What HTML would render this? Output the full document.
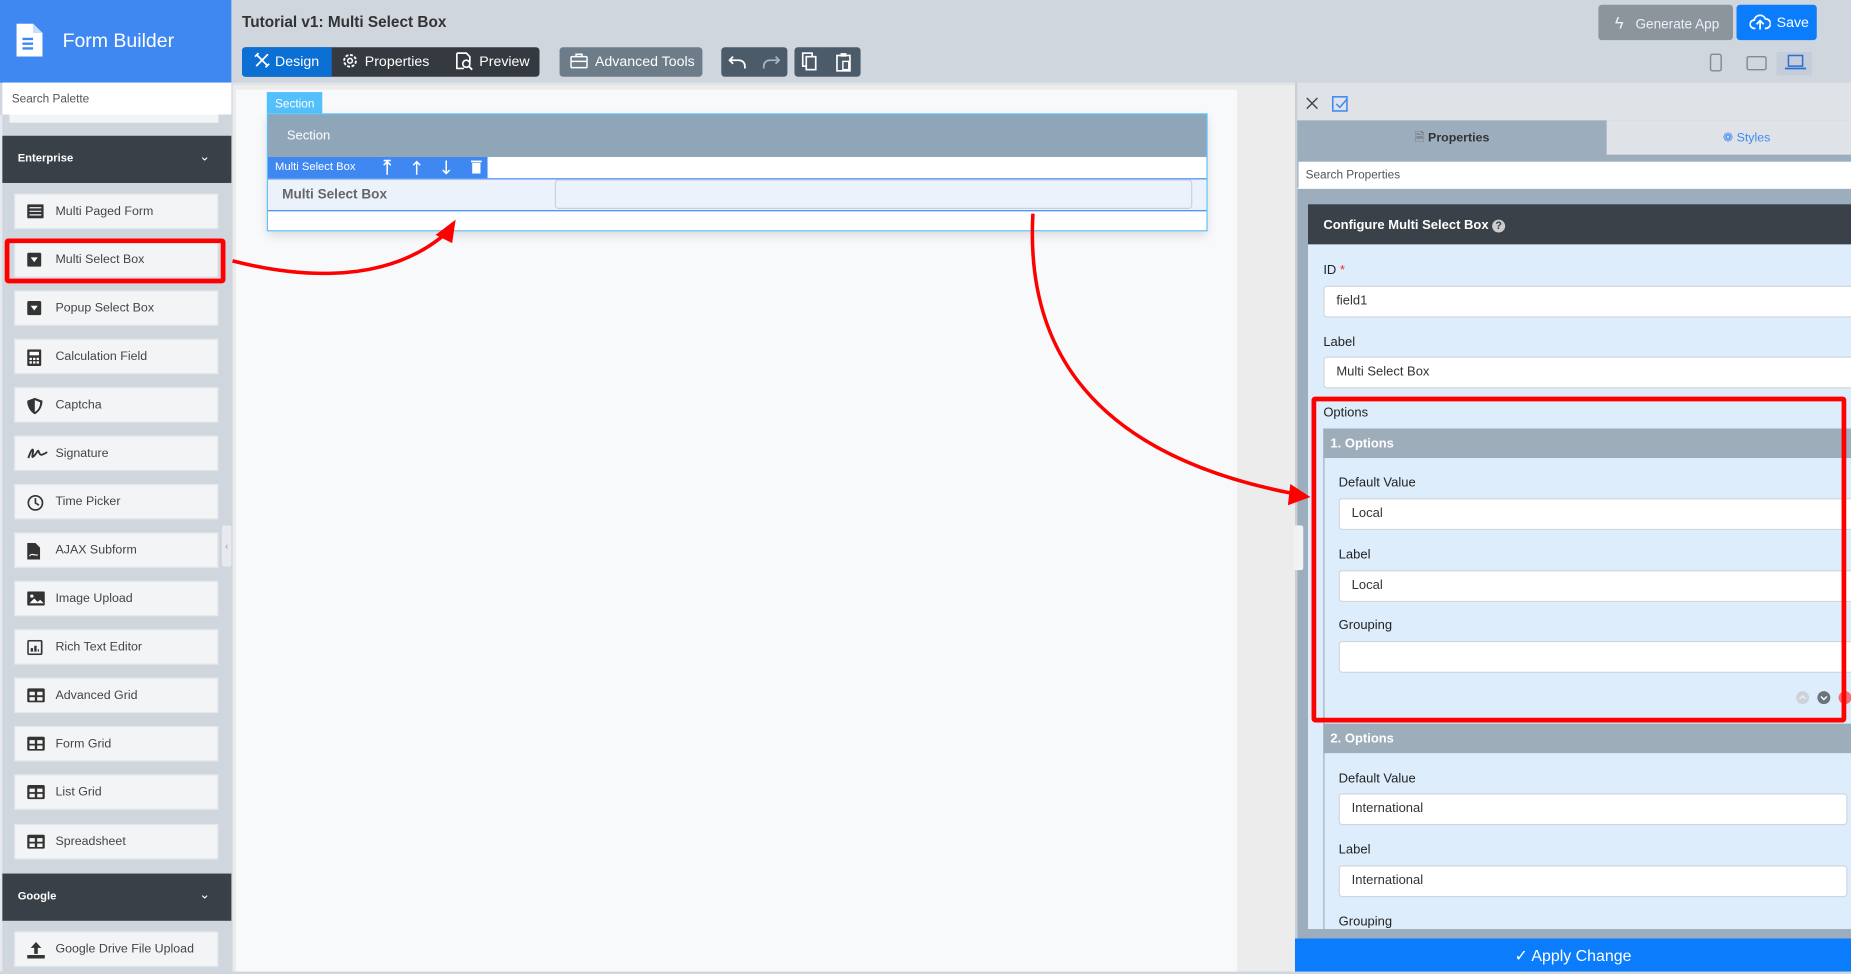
<!DOCTYPE html>
<html><head><meta charset="utf-8"><style>
*{box-sizing:border-box;margin:0;padding:0}
html,body{width:1851px;height:972px;overflow:hidden;background:#cfd6dd;font-family:"Liberation Sans",sans-serif}
#w{position:absolute;left:0;top:0;width:1568px;height:823px;transform:scale(1.18049);transform-origin:0 0;background:#cfd6dd}
.a{position:absolute}
.it{position:absolute;left:12px;width:173px;height:30px;background:#f3f4f6;border:1px solid #e3e6ea;font-size:10.5px;color:#444;line-height:29px;padding-left:34px}
.it svg{position:absolute;left:10px;top:8px}
.lbl{position:absolute;font-size:11px;color:#222}
.inp{position:absolute;background:#fff;border:1px solid #cfd6dd;border-radius:3px;font-size:11px;color:#333;line-height:24px;padding-left:10px}
.btn{position:absolute;color:#fff;font-size:12px;line-height:24px}
</style></head><body><div id="w">
<!-- sidebar -->
<div class="a" style="left:0;top:0;width:196px;height:70px;background:#3f88f2"></div>
<svg class="a" style="left:14px;top:20px" width="22" height="28" viewBox="0 0 22 28"><path d="M0 0h14l8 8v20H0z" fill="#fff"/><path d="M14 0v8h8" fill="#c9dcfb"/><path d="M5 13h9M5 17h9M5 21h9" stroke="#3f88f2" stroke-width="2"/></svg>
<div class="a" style="left:53px;top:26px;color:#fff;font-size:16.5px">Form Builder</div>
<div class="a" style="left:2px;top:70px;width:194px;height:27px;background:#fff;font-size:10px;color:#555;padding:9px 0 0 8px">Search Palette</div>
<div class="a" style="left:8px;top:97px;width:177px;height:7px;background:#f3f4f6"></div>
<div class="a" style="left:0;top:97px;width:2px;height:726px;background:#e6e9ed"></div>
<div class="a" style="left:2px;top:115px;width:194px;height:40px;background:#3a4048;color:#fff;font-size:9.5px;font-weight:bold;padding:14px 0 0 13px">Enterprise<span style="position:absolute;right:18px;top:11px;font-weight:normal;font-size:11px">&#8964;</span></div>
<div class="it" style="top:164px"><svg width="14" height="12"><rect x="0" y="0" width="14" height="12" rx="1" fill="#333"/><path d="M2 3h10M2 6h10M2 9h10" stroke="#f3f4f6" stroke-width="1"/></svg>Multi Paged Form</div>
<div class="it" style="top:205px"><svg width="12" height="12"><rect width="12" height="12" rx="1.5" fill="#333"/><path d="M3 4h6l-3 4z" fill="#fff"/></svg>Multi Select Box</div>
<div class="it" style="top:246px"><svg width="12" height="12"><rect width="12" height="12" rx="1.5" fill="#333"/><path d="M3 4h6l-3 4z" fill="#fff"/></svg>Popup Select Box</div>
<div class="it" style="top:287px"><svg width="12" height="14"><rect width="12" height="14" rx="1" fill="#333"/><rect x="2" y="2" width="8" height="3" fill="#fff"/><path d="M2 7h2v2H2zM5 7h2v2H5zM8 7h2v2H8zM2 10h2v2H2zM5 10h2v2H5zM8 10h2v2H8z" fill="#fff"/></svg>Calculation Field</div>
<div class="it" style="top:328px"><svg width="13" height="14"><path d="M6.5 0L13 2.5C13 8 10 12 6.5 14 3 12 0 8 0 2.5z" fill="#333"/><path d="M6.5 2L11 3.8C11 8 9 10.5 6.5 12z" fill="#f3f4f6"/></svg>Captcha</div>
<div class="it" style="top:369px"><svg width="18" height="12"><path d="M1 10C3 4 5 1 5 4S3 11 6 8 9 2 10 5 12 8 17 5" stroke="#333" stroke-width="1.6" fill="none"/></svg>Signature</div>
<div class="it" style="top:410px"><svg width="14" height="14"><circle cx="7" cy="7" r="6" stroke="#333" stroke-width="1.4" fill="none"/><path d="M7 3v4l3 2" stroke="#333" stroke-width="1.4" fill="none"/></svg>Time Picker</div>
<div class="it" style="top:451px"><svg width="11" height="14"><path d="M0 0h7l4 4v10H0z" fill="#333"/><path d="M2 11c2-3 4 0 7-1" stroke="#fff" fill="none"/></svg>AJAX Subform</div>
<div class="it" style="top:492px"><svg width="15" height="12"><rect width="15" height="12" rx="1" fill="#333"/><path d="M2 10l4-4 3 3 2-2 3 3z" fill="#fff"/><circle cx="4" cy="4" r="1.4" fill="#fff"/></svg>Image Upload</div>
<div class="it" style="top:533px"><svg width="13" height="13"><rect x=".7" y=".7" width="11.6" height="11.6" rx="1" stroke="#333" stroke-width="1.4" fill="none"/><path d="M3 10h2V7H3zM6 10h2V5H6zM9 10h1V8H9z" fill="#333"/></svg>Rich Text Editor</div>
<div class="it" style="top:574px"><svg width="15" height="12"><rect width="15" height="12" rx="1.5" fill="#333"/><path d="M2 3h4.5v3H2zM8.5 3H13v3H8.5zM2 7.5h4.5v3H2zM8.5 7.5H13v3H8.5z" fill="#f3f4f6"/></svg>Advanced Grid</div>
<div class="it" style="top:615px"><svg width="15" height="12"><rect width="15" height="12" rx="1.5" fill="#333"/><path d="M2 3h4.5v3H2zM8.5 3H13v3H8.5zM2 7.5h4.5v3H2zM8.5 7.5H13v3H8.5z" fill="#f3f4f6"/></svg>Form Grid</div>
<div class="it" style="top:656px"><svg width="15" height="12"><rect width="15" height="12" rx="1.5" fill="#333"/><path d="M2 3h4.5v3H2zM8.5 3H13v3H8.5zM2 7.5h4.5v3H2zM8.5 7.5H13v3H8.5z" fill="#f3f4f6"/></svg>List Grid</div>
<div class="it" style="top:698px"><svg width="15" height="12"><rect width="15" height="12" rx="1.5" fill="#333"/><path d="M2 3h4.5v3H2zM8.5 3H13v3H8.5zM2 7.5h4.5v3H2zM8.5 7.5H13v3H8.5z" fill="#f3f4f6"/></svg>Spreadsheet</div>
<div class="a" style="left:2px;top:740px;width:194px;height:40px;background:#3a4048;color:#fff;font-size:9.5px;font-weight:bold;padding:14px 0 0 13px">Google<span style="position:absolute;right:18px;top:11px;font-weight:normal;font-size:11px">&#8964;</span></div>
<div class="it" style="top:789px"><svg width="15" height="14"><path d="M7.5 0L12 5H9v5H6V5H3z" fill="#333"/><rect x="0" y="11" width="15" height="3" fill="#333"/></svg>Google Drive File Upload</div>
<div class="a" style="left:188px;top:445px;width:8px;height:35px;background:#e6e9ed;border-radius:2px;font-size:8px;color:#999;line-height:35px;text-align:center">&#8249;</div>
<div class="a" style="left:4px;top:202px;width:187px;height:38px;border:4px solid #f00;border-radius:3px"></div>
<!-- top bar -->
<div class="a" style="left:205px;top:11px;font-size:13px;font-weight:bold;color:#333">Tutorial v1: Multi Select Box</div>
<div class="a" style="left:205px;top:40px;width:252px;height:25px;background:#343a40;border-radius:3px"></div>
<div class="btn" style="left:205px;top:40px;width:76px;height:25px;background:#0b6fd4;border-radius:3px 0 0 3px;padding-left:10px"><svg width="14" height="14" style="vertical-align:-2px;margin-right:4px"><path d="M2 2l10 10M12 2L2 12M1 4l3-3M10 13l3-3" stroke="#fff" stroke-width="1.5" fill="none"/></svg>Design</div>
<div class="btn" style="left:289px;top:40px"><svg width="15" height="15" style="vertical-align:-3px;margin-right:5px"><circle cx="7.5" cy="7.5" r="5" stroke="#fff" stroke-width="1.6" fill="none" stroke-dasharray="2.5 1.4"/><circle cx="7.5" cy="7.5" r="2" stroke="#fff" stroke-width="1.3" fill="none"/></svg>Properties</div>
<div class="btn" style="left:385px;top:40px"><svg width="16" height="16" style="vertical-align:-4px;margin-right:5px"><path d="M2 1h8l3 3v5" stroke="#fff" stroke-width="1.4" fill="none"/><path d="M2 1v13h6" stroke="#fff" stroke-width="1.4" fill="none"/><circle cx="10" cy="10" r="3" stroke="#fff" stroke-width="1.4" fill="none"/><path d="M12 12l3 3" stroke="#fff" stroke-width="1.6"/></svg>Preview</div>
<div class="btn" style="left:474px;top:40px;width:121px;height:25px;background:#6c7c89;border-radius:3px;padding-left:9px"><svg width="15" height="13" style="vertical-align:-2px;margin-right:6px"><rect x=".7" y="3" width="13.6" height="9.3" rx="1" stroke="#fff" stroke-width="1.3" fill="none"/><path d="M5 3V1h5v2M1 7h13" stroke="#fff" stroke-width="1.3" fill="none"/></svg>Advanced Tools</div>
<div class="a" style="left:611px;top:40px;width:56px;height:25px;background:#4b5b69;border-radius:3px"></div>
<svg class="a" style="left:617px;top:44px" width="44" height="16"><path d="M4 4l-3 3 3 3M1 7h8a5 5 0 0 1 5 5v2" stroke="#fff" stroke-width="1.5" fill="none"/><path d="M40 4l3 3-3 3M43 7h-8a5 5 0 0 0-5 5v2" stroke="#a9b4be" stroke-width="1.5" fill="none"/></svg>
<div class="a" style="left:673px;top:40px;width:56px;height:25px;background:#4b5b69;border-radius:3px"></div>
<svg class="a" style="left:679px;top:44px" width="44" height="17"><rect x="1" y="1" width="8" height="11" stroke="#fff" stroke-width="1.4" fill="none"/><rect x="4" y="4" width="8" height="11" fill="#4b5b69" stroke="#fff" stroke-width="1.4"/><rect x="30" y="3" width="11" height="13" stroke="#fff" stroke-width="1.4" fill="none"/><rect x="33" y="1" width="5" height="3" fill="#fff"/><rect x="35" y="8" width="5" height="7" stroke="#fff" stroke-width="1.2" fill="none"/></svg>
<div class="btn" style="left:1354px;top:4px;width:114px;height:30px;background:#8d959c;border-radius:3px;line-height:30px;padding-left:14px;color:#eef;font-size:11.5px"><span style="font-size:14px;margin-right:10px">&#991;</span>Generate App</div>
<div class="btn" style="left:1471px;top:4px;width:68px;height:30px;background:#0b7dfc;border-radius:3px;line-height:30px;padding-left:11px"><svg width="18" height="13" style="vertical-align:-2px;margin-right:5px"><path d="M5 12H4a3.5 3.5 0 0 1 0-7 5 5 0 0 1 9.5-1A4 4 0 0 1 14 12h-1" stroke="#fff" stroke-width="1.5" fill="none"/><path d="M9 13V6M6 8.5l3-3 3 3" stroke="#fff" stroke-width="1.5" fill="none"/></svg>Save</div>
<svg class="a" style="left:1447px;top:44px" width="100" height="20"><rect x="2" y="2" width="9" height="14" rx="1.5" stroke="#7f8a96" stroke-width="1.2" fill="none"/><rect x="33" y="4" width="16" height="11" rx="1.5" stroke="#7f8a96" stroke-width="1.2" fill="none"/><rect x="58" y="-3" width="30" height="25" fill="#c5cdda"/><rect x="68" y="3" width="12" height="9" stroke="#2d6fd3" stroke-width="1.3" fill="none"/><path d="M65 14h18" stroke="#2d6fd3" stroke-width="1.5"/></svg>
<!-- canvas -->
<div class="a" style="left:197px;top:70px;width:900px;height:753px;background:#ececec;border-top:2px solid #dfe3e7"></div>
<div class="a" style="left:200px;top:76px;width:848px;height:747px;background:#f8f9fb"></div>
<div class="a" style="left:226px;top:78px;width:47px;height:19px;background:#54c0fb;color:#fff;font-size:10px;padding:5px 0 0 7px">Section</div>
<div class="a" style="left:226px;top:96px;width:797px;height:100px;background:#fff;border:1px solid #5bc0fb;box-shadow:0 4px 8px rgba(0,0,0,.12)"></div>
<div class="a" style="left:227px;top:97px;width:795px;height:36px;background:#8fa5b8;color:#fff;font-size:11px;padding:12px 0 0 16px">Section</div>
<div class="a" style="left:227px;top:133px;width:186px;height:18px;background:#3f88f2;color:#fff;font-size:9.5px;padding:3px 0 0 6px">Multi Select Box</div>
<svg class="a" style="left:320px;top:134px" width="92" height="16"><path d="M8 14V3M5 6l3-3 3 3M5 2h6" stroke="#fff" stroke-width="1.3" fill="none"/><path d="M33 14V3M30 6l3-3 3 3" stroke="#fff" stroke-width="1.3" fill="none"/><path d="M58 2v11M55 10l3 3 3-3" stroke="#fff" stroke-width="1.3" fill="none"/><rect x="80" y="4" width="7" height="9" fill="#fff"/><rect x="79" y="2" width="9" height="1.5" fill="#fff"/></svg>
<div class="a" style="left:227px;top:151px;width:795px;height:28px;background:#ecf2fc;border-top:1px solid #3f88f2;border-bottom:1px solid #3f88f2"></div>
<div class="a" style="left:239px;top:159px;font-size:11.5px;font-weight:bold;color:#666">Multi Select Box</div>
<div class="a" style="left:470px;top:152px;width:540px;height:25px;background:#ecf2fc;border:1px solid #c8d2df;border-radius:3px"></div>
<!-- right panel -->
<div class="a" style="left:1097px;top:70px;width:471px;height:753px;background:#dfe3e8;border-left:2px solid #c8cfd6"></div>
<svg class="a" style="left:1105px;top:81px" width="40" height="14"><path d="M2 2l9 9M11 2l-9 9" stroke="#444" stroke-width="1.2"/><rect x="24" y="1" width="12" height="12" stroke="#3f88f2" stroke-width="1.3" fill="none"/><path d="M27 7l3 3 6-7" stroke="#3f88f2" stroke-width="1.3" fill="none"/></svg>
<div class="a" style="left:1099px;top:102px;width:469px;height:57px;background:#9caebe"></div>
<div class="a" style="left:1099px;top:102px;width:262px;height:31px;background:#9caebe;font-size:10.5px;font-weight:bold;color:#333;text-align:center;line-height:31px"><span style="color:#666;font-weight:normal">&#128462;</span> Properties</div>
<div class="a" style="left:1361px;top:102px;width:207px;height:29px;background:#dfe3e8;font-size:10.5px;color:#3f88f2;text-align:center;line-height:30px;padding-left:30px">&#10049; Styles</div>
<div class="a" style="left:1100px;top:137px;width:468px;height:23px;background:#fff;font-size:10px;color:#555;padding:6px 0 0 6px">Search Properties</div>
<div class="a" style="left:1099px;top:160px;width:469px;height:627px;background:#9caebe"></div>
<div class="a" style="left:1108px;top:173px;width:460px;height:614px;background:#deedfc"></div>
<div class="a" style="left:1108px;top:173px;width:460px;height:34px;background:#3a4149;color:#fff;font-size:11px;font-weight:bold;padding:12px 0 0 13px">Configure Multi Select Box <span style="display:inline-block;width:11px;height:11px;border-radius:50%;background:#ccc;color:#3a4149;font-size:9px;text-align:center;line-height:11px">?</span></div>
<div class="lbl" style="left:1121px;top:223px">ID <span style="color:#e33">*</span></div>
<div class="inp" style="left:1121px;top:242px;width:460px;height:27px">field1</div>
<div class="lbl" style="left:1121px;top:284px">Label</div>
<div class="inp" style="left:1121px;top:302px;width:460px;height:27px">Multi Select Box</div>
<div class="lbl" style="left:1121px;top:344px">Options</div>
<div class="a" style="left:1121px;top:363px;width:447px;height:424px;border-left:1px solid #9caebe"></div>
<div class="a" style="left:1121px;top:363px;width:447px;height:25px;background:#9eadba;color:#fff;font-size:11px;font-weight:bold;padding:7px 0 0 6px">1. Options</div>
<div class="lbl" style="left:1134px;top:403px">Default Value</div>
<div class="inp" style="left:1134px;top:422px;width:440px;height:27px">Local</div>
<div class="lbl" style="left:1134px;top:464px">Label</div>
<div class="inp" style="left:1134px;top:483px;width:440px;height:27px">Local</div>
<div class="lbl" style="left:1134px;top:524px">Grouping</div>
<div class="inp" style="left:1134px;top:543px;width:440px;height:27px"></div>
<svg class="a" style="left:1521px;top:584px" width="47" height="14"><circle cx="6" cy="7" r="5.5" fill="#ccd3da"/><path d="M3.5 8l2.5-2.5L8.5 8" stroke="#eee" stroke-width="1.2" fill="none"/><circle cx="24" cy="7" r="5.5" fill="#6b737b"/><path d="M21.5 6l2.5 2.5L26.5 6" stroke="#fff" stroke-width="1.2" fill="none"/><circle cx="42" cy="7" r="5.5" fill="#f07070"/></svg>
<div class="a" style="left:1121px;top:613px;width:447px;height:25px;background:#9eadba;color:#fff;font-size:11px;font-weight:bold;padding:7px 0 0 6px">2. Options</div>
<div class="lbl" style="left:1134px;top:654px">Default Value</div>
<div class="inp" style="left:1134px;top:672px;width:431px;height:27px">International</div>
<div class="lbl" style="left:1134px;top:714px">Label</div>
<div class="inp" style="left:1134px;top:733px;width:431px;height:27px">International</div>
<div class="lbl" style="left:1134px;top:775px">Grouping</div>
<div class="a" style="left:1099px;top:787px;width:469px;height:8px;background:#9caebe"></div>
<div class="a" style="left:1097px;top:795px;width:471px;height:28px;background:#0b7dfc;color:#fff;font-size:13.5px;text-align:center;line-height:30px">&#10003; Apply Change</div>
<div class="a" style="left:1096px;top:445px;width:8px;height:38px;background:#f0f2f4;border-radius:2px"></div>
<div class="a" style="left:1111px;top:336px;width:453px;height:276px;border:4px solid #f00;border-radius:3px"></div>
<!-- arrows -->
<svg class="a" style="left:0;top:0" width="1568" height="823"><path d="M197 221C240 232 320 245 375 200" stroke="#f00" stroke-width="3" fill="none"/><path d="M386 186L383 206 369 199z" fill="#f00"/><path d="M875 181C870 270 900 380 1095 418" stroke="#f00" stroke-width="3" fill="none"/><path d="M1110 421L1091 428 1093 410z" fill="#f00"/></svg>
</div></body></html>
